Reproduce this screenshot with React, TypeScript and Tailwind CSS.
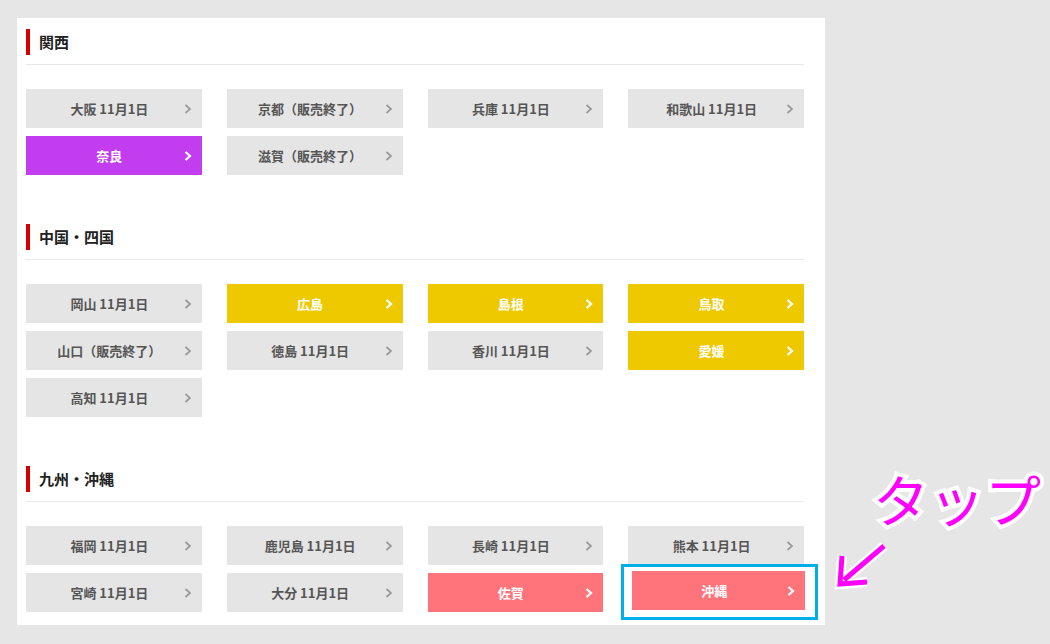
import React from "react";

type Tone = "gray" | "purple" | "yellow" | "pink";

type Pref = { name: string; tone: Tone; focus?: boolean };

const sections: { title: string; items: Pref[] }[] = [
  {
    title: "関西",
    items: [
      { name: "大阪 11月1日", tone: "gray" },
      { name: "京都（販売終了）", tone: "gray" },
      { name: "兵庫 11月1日", tone: "gray" },
      { name: "和歌山 11月1日", tone: "gray" },
      { name: "奈良", tone: "purple" },
      { name: "滋賀（販売終了）", tone: "gray" }
    ]
  },
  {
    title: "中国・四国",
    items: [
      { name: "岡山 11月1日", tone: "gray" },
      { name: "広島", tone: "yellow" },
      { name: "島根", tone: "yellow" },
      { name: "鳥取", tone: "yellow" },
      { name: "山口（販売終了）", tone: "gray" },
      { name: "徳島 11月1日", tone: "gray" },
      { name: "香川 11月1日", tone: "gray" },
      { name: "愛媛", tone: "yellow" },
      { name: "高知 11月1日", tone: "gray" }
    ]
  },
  {
    title: "九州・沖縄",
    items: [
      { name: "福岡 11月1日", tone: "gray" },
      { name: "鹿児島 11月1日", tone: "gray" },
      { name: "長崎 11月1日", tone: "gray" },
      { name: "熊本 11月1日", tone: "gray" },
      { name: "宮崎 11月1日", tone: "gray" },
      { name: "大分 11月1日", tone: "gray" },
      { name: "佐賀", tone: "pink" },
      { name: "沖縄", tone: "pink", focus: true }
    ]
  }
];

const toneClass: Record<Tone, string> = {
  gray: "bg-[#e5e5e5] text-[#555]",
  purple: "bg-[#c33df0] text-white",
  yellow: "bg-[#eec900] text-white",
  pink: "bg-[#ff737b] text-white"
};

function Chevron({ light }: { light: boolean }) {
  return (
    <svg width="8" height="11" viewBox="0 0 8 11" className="absolute right-[10px] top-1/2 -translate-y-1/2">
      <polyline
        points="1.5,1.5 6,5.5 1.5,9.5"
        fill="none"
        stroke={light ? "#ffffff" : "#9a9a9a"}
        strokeWidth={light ? 2.2 : 1.7}
      />
    </svg>
  );
}

function PrefButton({ item }: { item: Pref }) {
  const light = item.tone !== "gray";
  return (
    <a
      href="#"
      className={`relative flex h-[39px] items-center justify-center pr-[9px] text-[13px] font-bold ${toneClass[item.tone]}`}
    >
      {item.name}
      <Chevron light={light} />
    </a>
  );
}

// 沖縄 is shown as a pasted, highlighted button: nudged a little and framed in blue
function Cell({ item }: { item: Pref }) {
  if (!item.focus) return <PrefButton item={item} />;
  return (
    <div className="relative">
      <div className="relative left-[4px] -top-[2px] w-[173px]">
        <PrefButton item={item} />
      </div>
      <div className="pointer-events-none absolute -left-[7px] -top-[9px] h-[56px] w-[197px] border-[3px] border-[#00aee8]" />
    </div>
  );
}

function Section({ title, items, first }: { title: string; items: Pref[]; first: boolean }) {
  return (
    <section className={first ? "pt-[11px]" : "pt-[49px]"}>
      <h2 className="flex h-[26px] items-center border-l-4 border-[#d40000] pl-[9px] text-[15px] font-bold text-[#222]">
        {title}
      </h2>
      <div className="mt-[9px] h-px bg-[#e8e8e8]" />
      <div className="mt-[24px] grid grid-cols-4 gap-x-[25px] gap-y-[8px]">
        {items.map((item) => (
          <Cell key={item.name} item={item} />
        ))}
      </div>
    </section>
  );
}

export default function App() {
  return (
    <div
      className="relative h-[644px] w-[1050px] overflow-hidden bg-[#e6e6e6] pl-[17px] pt-[18px]"
      style={{ fontFamily: '"Noto Sans CJK JP", "Noto Sans", sans-serif' }}
    >
      <div className="w-[808px] bg-white pb-[13px] pl-[9px] pr-[21px]">
        {sections.map((s, i) => (
          <Section key={s.title} title={s.title} items={s.items} first={i === 0} />
        ))}
      </div>

      <span className="absolute left-[873px] top-[470px] text-[56px] font-normal leading-none text-[#ff00ff] [-webkit-text-stroke:8px_white] [paint-order:stroke_fill]">
        タップ
      </span>

      <svg className="absolute left-0 top-0" width="1050" height="644" viewBox="0 0 1050 644">
        <g fill="none" strokeLinecap="butt" strokeLinejoin="miter">
          <g stroke="#ffffff" strokeWidth="10">
            <line x1="884" y1="546" x2="844" y2="580" />
            <polyline points="842,556 840,584 867,582" />
          </g>
          <g stroke="#ff00ff" strokeWidth="5">
            <line x1="884" y1="546" x2="844" y2="580" />
            <polyline points="842,556 840,584 867,582" />
          </g>
        </g>
      </svg>
    </div>
  );
}
